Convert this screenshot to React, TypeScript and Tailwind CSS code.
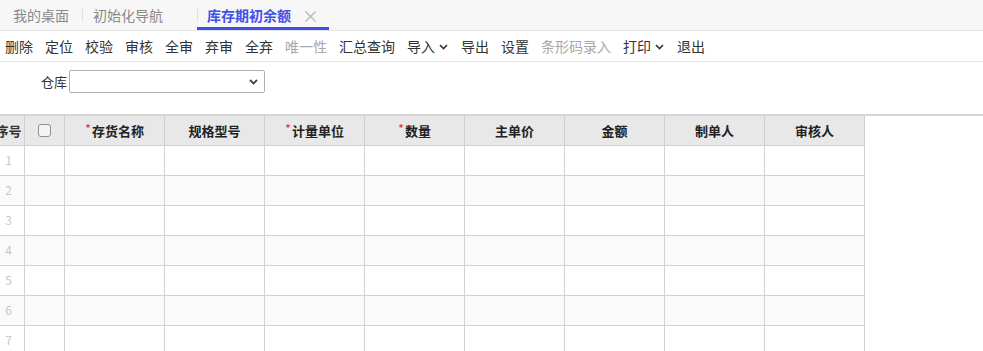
import React from "react";

const font = { fontFamily: '"Noto Sans CJK SC", "Microsoft YaHei", sans-serif' };

function Chevron() {
  return (
    <svg width="9" height="6" viewBox="0 0 9 6" className="ml-[4px] mr-[1px] mt-[1px]">
      <path d="M1 1 L4.5 4.5 L8 1" fill="none" stroke="#333" strokeWidth="1.6" />
    </svg>
  );
}

const tools: { t: string; dis?: boolean; dd?: boolean }[] = [
  { t: "删除" },
  { t: "定位" },
  { t: "校验" },
  { t: "审核" },
  { t: "全审" },
  { t: "弃审" },
  { t: "全弃" },
  { t: "唯一性", dis: true },
  { t: "汇总查询" },
  { t: "导入", dd: true },
  { t: "导出" },
  { t: "设置" },
  { t: "条形码录入", dis: true },
  { t: "打印", dd: true },
  { t: "退出" },
];

const cols: { t: string; req?: boolean }[] = [
  { t: "存货名称", req: true },
  { t: "规格型号" },
  { t: "计量单位", req: true },
  { t: "数量", req: true },
  { t: "主单价" },
  { t: "金额" },
  { t: "制单人" },
  { t: "审核人" },
];

export default function App() {
  return (
    <div className="w-[983px] h-[351px] overflow-hidden bg-white text-[#333]" style={font}>
      {/* tabs */}
      <div className="h-[31px] bg-[#f7f7f7] border-b border-[#e4e4e4] flex items-stretch text-[14px] whitespace-nowrap">
        <div className="px-[13px] flex items-center text-[#8a8a8a]">我的桌面</div>
        <div className="w-px bg-[#e0e0e0] my-[8px]" />
        <div className="px-[10px] flex items-center text-[#8a8a8a]">初始化导航</div>
        <div className="w-[24px]" />
        <div className="w-px bg-[#e0e0e0] my-[8px]" />
        <div className="relative flex items-center pl-[10px] pr-[10px] ml-[-1px]">
          <span className="font-bold text-[#4150e6]">库存期初余额</span>
          <span className="ml-[11px] text-[#b5b5b5] text-[17px] leading-none">×</span>
          <div className="absolute left-0 right-0 bottom-[0px] h-[3px] bg-[#3f4fe3]" />
        </div>
      </div>
      {/* toolbar */}
      <div className="h-[31px] border-b border-[#e4e4e4] flex items-center pl-[5px] text-[14px] whitespace-nowrap">
        {tools.map((x) => (
          <div
            key={x.t}
            className={`flex items-center mr-[12px] ${x.dis ? "text-[#a8a8a8]" : "text-[#333]"}`}
          >
            {x.t}
            {x.dd && <Chevron />}
          </div>
        ))}
      </div>
      {/* filter */}
      <div className="h-[52px] flex items-start pt-[8px] pl-[41px] text-[13px]">
        <span className="mt-[2px] mr-[2px]">仓库</span>
        <div className="w-[196px] h-[23px] border border-[#b0b0b0] rounded-[2px] bg-white flex items-center justify-end pr-[6px]">
          <svg width="9" height="6" viewBox="0 0 9 6">
            <path d="M1 1 L4.5 4.5 L8 1" fill="none" stroke="#444" strokeWidth="1.8" />
          </svg>
        </div>
      </div>
      {/* table */}
      <div className="border-t-2 border-[#d6d6d6] overflow-hidden">
        <table className="border-collapse ml-[-8px] text-[13px] table-fixed">
          <colgroup>
            <col className="w-[32px]" />
            <col className="w-[40px]" />
            {cols.map((c) => (
              <col key={c.t} className="w-[100px]" />
            ))}
          </colgroup>
          <thead>
            <tr className="h-[29px] bg-[#e8e8e8]">
              <th className="border border-t-0 border-[#cfcfcf] font-bold text-center whitespace-nowrap">序号</th>
              <th className="border border-t-0 border-[#cfcfcf]">
                <div className="w-[13px] h-[13px] mx-auto border border-[#8f8f8f] rounded-[3px] bg-[#f4f4f4]" />
              </th>
              {cols.map((c) => (
                <th key={c.t} className="border border-t-0 border-[#cfcfcf] font-bold text-center text-[#222]">
                  {c.req && <span className="text-[#f0334b] font-normal mr-[1px] relative top-[-2px]">*</span>}
                  {c.t}
                </th>
              ))}
            </tr>
          </thead>
          <tbody>
            {[1, 2, 3, 4, 5, 6, 7].map((n) => (
              <tr key={n} className={`h-[30px] ${n % 2 === 0 ? "bg-[#fafafa]" : "bg-white"}`}>
                <td className="border border-[#d2d2d2] text-center text-[#c8c8c8] text-[12px]">{n}</td>
                <td className="border border-[#d2d2d2]" />
                {cols.map((c) => (
                  <td key={c.t} className="border border-[#d2d2d2]" />
                ))}
              </tr>
            ))}
          </tbody>
        </table>
      </div>
    </div>
  );
}
